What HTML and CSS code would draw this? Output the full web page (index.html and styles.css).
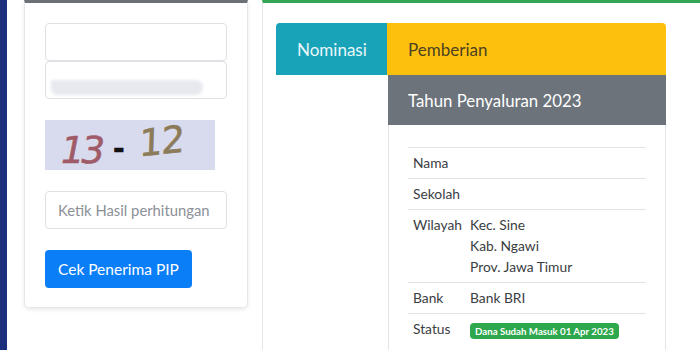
FILE: index.html
```html
<!DOCTYPE html>
<html lang="id">
<head>
    <meta charset="UTF-8">
    <meta name="viewport" content="width=device-width, initial-scale=1.0">
    <title>Cek Penerima PIP</title>
    <link rel="stylesheet" href="styles.css">
</head>
<body>

    <div class="strip"></div>

    <div class="page">
        <div class="card form-card">
            <input type="text" class="field field-top">
            <div class="field-wrap">
                <input type="text" class="field field-bottom">
                <div class="redact"></div>
            </div>
            <div class="captcha">
                <span class="num-a">13</span>
                <span class="dash">-</span>
                <span class="num-b">12</span>
            </div>
            <input type="text" class="field field-answer" placeholder="Ketik Hasil perhitungan">
            <button class="btn-check">Cek Penerima PIP</button>
        </div>

        <div class="card result-card">
            <div class="tabs">
                <div class="tab tab-nominasi">Nominasi</div>
                <div class="tab tab-pemberian">Pemberian</div>
                <div class="tab-space"></div>
                <div class="year-card">
                    <div class="year-head">Tahun Penyaluran 2023</div>
                    <div class="year-body">
                        <table class="info">
                            <tr class="row-first">
                                <td class="label">Nama</td>
                                <td></td>
                            </tr>
                            <tr>
                                <td class="label">Sekolah</td>
                                <td></td>
                            </tr>
                            <tr>
                                <td class="label">Wilayah</td>
                                <td>Kec. Sine<br>Kab. Ngawi<br>Prov. Jawa Timur</td>
                            </tr>
                            <tr>
                                <td class="label">Bank</td>
                                <td>Bank BRI</td>
                            </tr>
                            <tr>
                                <td class="label">Status</td>
                                <td><span class="badge">Dana Sudah Masuk 01 Apr 2023</span></td>
                            </tr>
                        </table>
                    </div>
                </div>
            </div>
        </div>
    </div>

</body>
</html>
```

FILE: styles.css
```css
body {
    margin: 0;
    height: 350px;
    overflow: hidden;
    display: flex;
    background: #fff;
    font-family: Lato, "Open Sans", sans-serif;
    color: #3a3d42;
}

.strip {
    width: 7px;
    flex-shrink: 0;
    background: #1b2f7c;
}

.page {
    flex: 1;
    height: 350px;
    overflow: hidden;
    display: flex;
    align-items: flex-start;
    gap: 14px;
    padding-left: 17px;
}

.card {
    box-sizing: border-box;
    background: #fff;
}

/* kiri: form cek */
.form-card {
    width: 224px;
    padding: 20px 20px 19px;
    border: 1px solid #e6e7e9;
    border-top: 3px solid #6c7178;
    border-radius: 0 0 5px 5px;
    box-shadow: 0 2px 4px rgba(0, 0, 0, 0.08);
}

.field {
    display: block;
    box-sizing: border-box;
    width: 182px;
    height: 38px;
    margin: 0;
    padding: 0 10px 0 12px;
    border: 1px solid #dfe1e5;
    border-radius: 4px;
    font-family: inherit;
    font-size: 14.8px;
    background: #fff;
}

.field-wrap {
    position: relative;
}

.redact {
    position: absolute;
    left: 6px;
    top: 19px;
    width: 152px;
    height: 15px;
    border-radius: 3px 10px 10px 8px;
    background: #e7e9ef;
    filter: blur(1.5px);
}

.captcha {
    width: 170px;
    height: 50px;
    margin-top: 21px;
    background: #d8daed;
    display: flex;
    align-items: center;
    padding-left: 16px;
    box-sizing: border-box;
    font-family: "DejaVu Sans", sans-serif;
    -webkit-text-stroke: 0.6px currentColor;
}

.num-a {
    color: #a05b69;
    font-size: 37px;
    font-style: italic;
    letter-spacing: -3px;
    margin-top: 10px;
}

.dash {
    color: #111;
    font-size: 28px;
    font-weight: bold;
    margin: 6px 14px 0 11px;
}

.num-b {
    display: inline-block;
    color: #8c7b59;
    font-size: 37px;
    letter-spacing: -1px;
    transform: rotate(-6deg) skewX(-8deg);
    margin-top: -8px;
}

.field-answer {
    margin-top: 21px;
}

.field-answer::placeholder {
    color: #8b9097;
}

.btn-check {
    display: block;
    height: 38px;
    margin-top: 21px;
    padding: 0 13px;
    border: none;
    border-radius: 4px;
    background: #0a7ef7;
    color: #fff;
    font-family: inherit;
    font-size: 15.5px;
}

/* kanan: hasil */
.result-card {
    flex: 1;
    height: 350px;
    padding: 20px 13px 0;
    border-left: 1px solid #e4e5e7;
    border-top: 3px solid #34a552;
}

.tabs {
    display: grid;
    grid-template-columns: 111px 279px;
}

.tab {
    height: 52px;
    display: flex;
    align-items: center;
    padding-left: 21px;
    font-size: 17px;
}

.tab-nominasi {
    background: #19a3b9;
    color: #eaf7f9;
    border-radius: 4px 0 0 0;
}

.tab-pemberian {
    background: #fdc00d;
    color: #4d4222;
    border-radius: 0 4px 0 0;
}

.year-card {
    margin-left: 1px;
}

.year-head {
    height: 50px;
    display: flex;
    align-items: center;
    padding-left: 20px;
    background: #6c737b;
    color: #fff;
    font-size: 16.8px;
}

.year-body {
    padding: 22px 19px 20px;
    border: 1px solid #e2e4e7;
    border-top: none;
}

.info {
    width: 100%;
    border-collapse: collapse;
    font-size: 13.8px;
    line-height: 21px;
}

.info td {
    padding: 4px 5px 5px 3px;
    border-top: 1px solid #e1e3e6;
    vertical-align: top;
}

.info .label {
    width: 45px;
    padding-left: 5px;
    white-space: nowrap;
}

.badge {
    display: inline-block;
    padding: 0 5px;
    line-height: 16px;
    border-radius: 4px;
    background: #2ea84c;
    color: #fff;
    font-size: 9.7px;
    font-weight: bold;
    vertical-align: middle;
}
```
